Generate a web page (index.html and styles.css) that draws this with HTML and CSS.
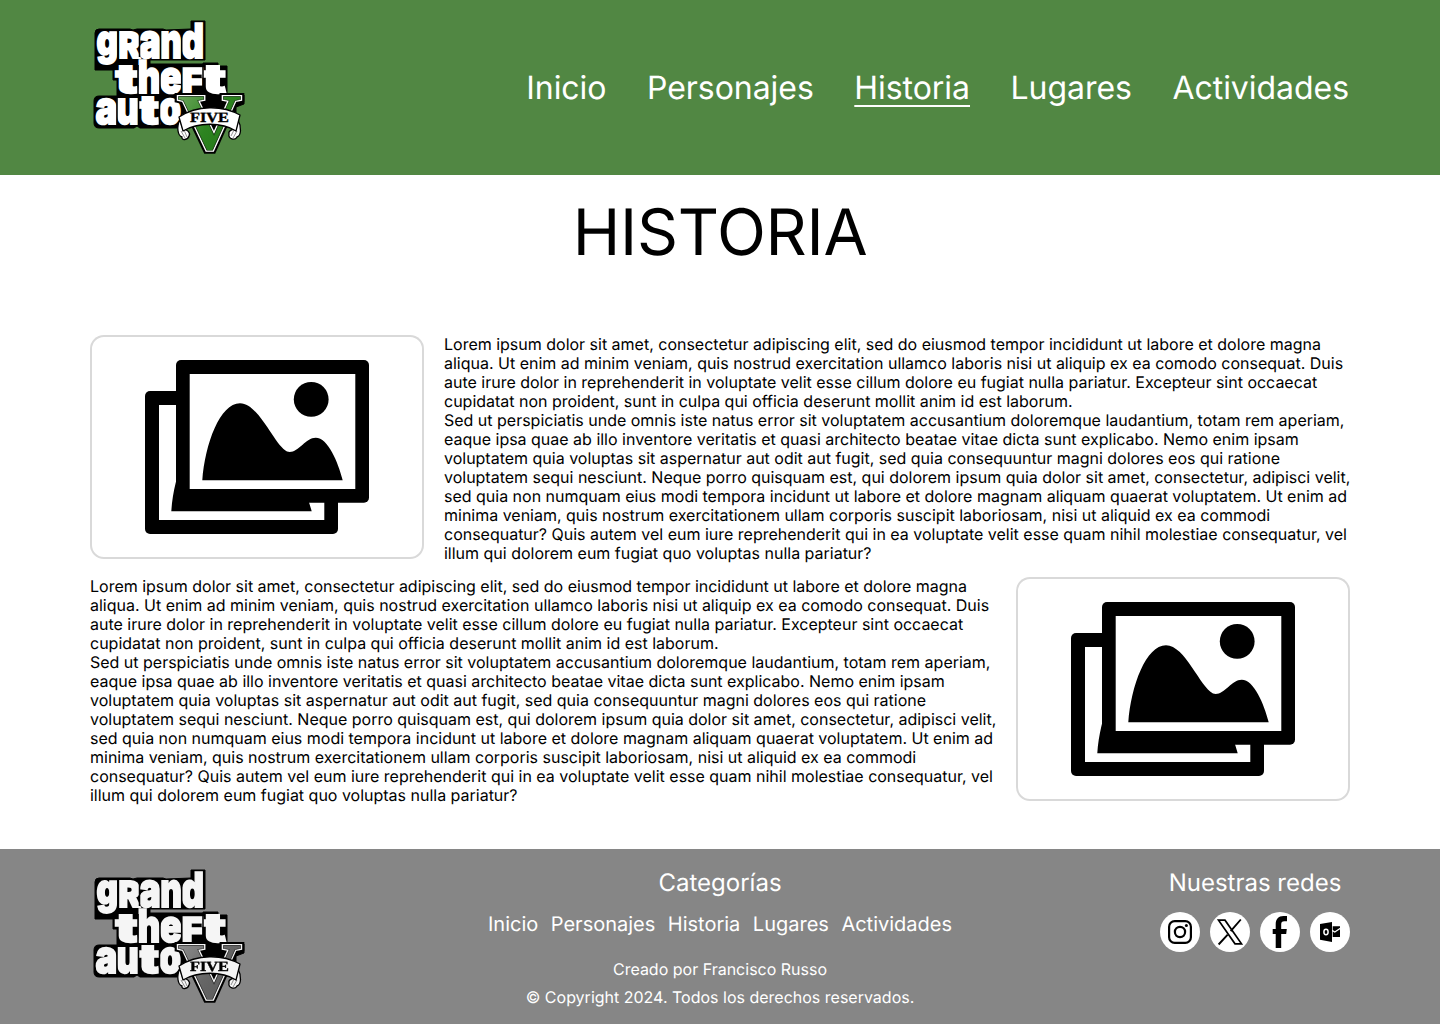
FILE: index.html
```html
<!DOCTYPE html>
<html lang="es">
<head>
<meta charset="utf-8">
<title>Historia</title>
<link rel="stylesheet" href="styles.css">
</head>
<body>
<svg class="sprite" aria-hidden="true">
  <defs>
    <linearGradient id="leaf" x1="0" y1="0" x2="1" y2="1">
      <stop offset="0" stop-color="#79ad68"/>
      <stop offset=".5" stop-color="#2d8420"/>
      <stop offset="1" stop-color="#1f6f14"/>
    </linearGradient>
    <text id="numeral" x="93.500" y="139" class="numeral" textLength="64" lengthAdjust="spacingAndGlyphs">V</text>
    <symbol id="logo" viewBox="6 0 155 155">
      <path class="plate" d="M15 19H46L49 20L53 19H79L82 20L107 19V11H121V50H66V54H119V53H134V56H143V85H160V94L152 97V117H95L93 118H56L53 116L50 118H15Q10 118 10 113V91Q10 86 15 86H33V70H29V60H11V23Q11 19 15 19Z"/>
      <g class="word">
        <text y="47.500"><tspan x="12.500" y="44.500" class="gee" textLength="21.500" lengthAdjust="spacingAndGlyphs">g</tspan><tspan x="34.500" y="47.500" class="small" textLength="22" lengthAdjust="spacingAndGlyphs">R</tspan><tspan x="55" textLength="22" lengthAdjust="spacingAndGlyphs">a</tspan><tspan x="76" textLength="22" lengthAdjust="spacingAndGlyphs">n</tspan><tspan x="97" textLength="23" lengthAdjust="spacingAndGlyphs">d</tspan></text>
        <text y="83" class="low"><tspan x="31.500" class="tee" textLength="23" lengthAdjust="spacingAndGlyphs">t</tspan><tspan x="53.500" textLength="23" lengthAdjust="spacingAndGlyphs">h</tspan><tspan x="75.500" textLength="22.500" lengthAdjust="spacingAndGlyphs">e</tspan><tspan x="97.500" class="eff" textLength="22" lengthAdjust="spacingAndGlyphs">F</tspan><tspan x="118.500" class="tee" textLength="23.500" lengthAdjust="spacingAndGlyphs">t</tspan></text>
        <text y="114" class="last"><tspan x="11.500" textLength="22" lengthAdjust="spacingAndGlyphs">a</tspan><tspan x="32" textLength="23" lengthAdjust="spacingAndGlyphs">u</tspan><tspan x="54.500" class="tee" textLength="21" lengthAdjust="spacingAndGlyphs">t</tspan><tspan x="75" textLength="22" lengthAdjust="spacingAndGlyphs">o</tspan></text>
      </g>
      <path class="seams" d="M34 21V52M55.500 21V47M76.500 21V49M97.700 21V49M54 55V84M76 57V84M97.700 57V84M119 57V84M33 87V116M54.500 87V116M75.500 87V116"/>
      <use href="#numeral" class="edge"/>
      <use href="#numeral" class="rim"/>
      <use href="#numeral" class="core"/>
      <path class="ribbon" d="M96 110C92 117 94 126 98 127C97 131 104 130 105 126C107 123 103 119 99 119ZM154 110C158 117 157 126 153 127C151 131 144 129 145 124C144 121 148 119 152 119Z"/>
      <path class="curl" d="M97 121L101 128M100 120L103 127M153 121L149 128M150 120L147 126"/>
      <path class="ribbon" d="M95 107C113 95 138 95 156 105L152 121C138 112 114 112 99 121Z"/>
      <text x="106" y="111.500" class="five" textLength="39" lengthAdjust="spacingAndGlyphs">FIVE</text>
    </symbol>
    <symbol id="pictures" viewBox="0 0 334 224">
      <rect x="55" y="56" width="193" height="143" rx="5"/>
      <path fill="#fff" d="M69 70H234.300V185H69Z"/>
      <path id="hills" d="M81.300 176.300C84 140 99 99.300 119 99.300C138 99.300 153 141 166 147.500C176 151 184 133.700 194.700 133.700C207 133.700 217 158 221.700 176.300Z"/>
      <rect x="86" y="25" width="193" height="142.700" rx="5"/>
      <path fill="#fff" d="M99.700 39H265.300V154H99.700Z"/>
      <use href="#hills" x="31" y="-31"/>
      <circle cx="221.200" cy="64.400" r="17.400"/>
    </symbol>
  </defs>
</svg>

<header class="header">
  <svg class="logo" role="img" aria-label="Grand Theft Auto V"><use href="#logo"/></svg>
  <nav class="nav">
    <a>Inicio</a>
    <a>Personajes</a>
    <a class="active">Historia</a>
    <a>Lugares</a>
    <a>Actividades</a>
  </nav>
</header>

<main class="main">
  <h1 class="title">HISTORIA</h1>
  <section class="row">
    <svg class="picture"><use href="#pictures"/></svg>
    <p class="copy">Lorem ipsum dolor sit amet, consectetur adipiscing elit, sed do eiusmod tempor incididunt ut labore et dolore magna<br>aliqua. Ut enim ad minim veniam, quis nostrud exercitation ullamco laboris nisi ut aliquip ex ea comodo consequat. Duis<br>aute irure dolor in reprehenderit in voluptate velit esse cillum dolore eu fugiat nulla pariatur. Excepteur sint occaecat<br>cupidatat non proident, sunt in culpa qui officia deserunt mollit anim id est laborum.<br>Sed ut perspiciatis unde omnis iste natus error sit voluptatem accusantium doloremque laudantium, totam rem aperiam,<br>eaque ipsa quae ab illo inventore veritatis et quasi architecto beatae vitae dicta sunt explicabo. Nemo enim ipsam<br>voluptatem quia voluptas sit aspernatur aut odit aut fugit, sed quia consequuntur magni dolores eos qui ratione<br>voluptatem sequi nesciunt. Neque porro quisquam est, qui dolorem ipsum quia dolor sit amet, consectetur, adipisci velit,<br>sed quia non numquam eius modi tempora incidunt ut labore et dolore magnam aliquam quaerat voluptatem. Ut enim ad<br>minima veniam, quis nostrum exercitationem ullam corporis suscipit laboriosam, nisi ut aliquid ex ea commodi<br>consequatur? Quis autem vel eum iure reprehenderit qui in ea voluptate velit esse quam nihil molestiae consequatur, vel<br>illum qui dolorem eum fugiat quo voluptas nulla pariatur?</p>
  </section>
  <section class="row">
    <p class="copy">Lorem ipsum dolor sit amet, consectetur adipiscing elit, sed do eiusmod tempor incididunt ut labore et dolore magna<br>aliqua. Ut enim ad minim veniam, quis nostrud exercitation ullamco laboris nisi ut aliquip ex ea comodo consequat. Duis<br>aute irure dolor in reprehenderit in voluptate velit esse cillum dolore eu fugiat nulla pariatur. Excepteur sint occaecat<br>cupidatat non proident, sunt in culpa qui officia deserunt mollit anim id est laborum.<br>Sed ut perspiciatis unde omnis iste natus error sit voluptatem accusantium doloremque laudantium, totam rem aperiam,<br>eaque ipsa quae ab illo inventore veritatis et quasi architecto beatae vitae dicta sunt explicabo. Nemo enim ipsam<br>voluptatem quia voluptas sit aspernatur aut odit aut fugit, sed quia consequuntur magni dolores eos qui ratione<br>voluptatem sequi nesciunt. Neque porro quisquam est, qui dolorem ipsum quia dolor sit amet, consectetur, adipisci velit,<br>sed quia non numquam eius modi tempora incidunt ut labore et dolore magnam aliquam quaerat voluptatem. Ut enim ad<br>minima veniam, quis nostrum exercitationem ullam corporis suscipit laboriosam, nisi ut aliquid ex ea commodi<br>consequatur? Quis autem vel eum iure reprehenderit qui in ea voluptate velit esse quam nihil molestiae consequatur, vel<br>illum qui dolorem eum fugiat quo voluptas nulla pariatur?</p>
    <svg class="picture"><use href="#pictures"/></svg>
  </section>
</main>

<footer class="footer">
  <svg class="logo gray" role="img" aria-label="Grand Theft Auto V"><use href="#logo"/></svg>
  <div class="center">
    <h2 class="heading">Categorías</h2>
    <nav class="links">
      <a>Inicio</a>
      <a>Personajes</a>
      <a>Historia</a>
      <a>Lugares</a>
      <a>Actividades</a>
    </nav>
    <p class="credit">Creado por Francisco Russo</p>
    <p class="credit">© Copyright 2024. Todos los derechos reservados.</p>
  </div>
  <div class="social">
    <h2 class="heading">Nuestras redes</h2>
    <div class="icons">
      <svg viewBox="0 0 40 40"><circle cx="20" cy="20" r="20" fill="#fff"/><rect x="9.100" y="9.100" width="21.800" height="21.800" rx="5.600" fill="none" stroke="#000" stroke-width="2.200"/><circle cx="20" cy="20" r="5.100" fill="none" stroke="#000" stroke-width="2.200"/><circle cx="26.400" cy="13.600" r="1.500"/></svg>
      <svg viewBox="0 0 40 40"><circle cx="20" cy="20" r="20" fill="#fff"/><path d="M8.500 8.200H15L31.500 31.800H25Z" fill="none" stroke="#000" stroke-width="1.700"/><path d="M30.800 7.500L20.700 19.100M17.700 22.600L8.600 32.500" stroke="#000" stroke-width="1.900"/></svg>
      <svg viewBox="0 0 40 40"><circle cx="20" cy="20" r="20" fill="#fff"/><path d="M15.700 36V22H12.700V17.100H15.700V12.500C15.700 7 18.400 4 23.500 4H27V9.200H24.300C22 9.200 21.200 10.100 21.200 12.500V17.100H26.800L26.200 22H21.200V36Z"/></svg>
      <svg viewBox="0 0 40 40"><circle cx="20" cy="20" r="20" fill="#fff"/><path d="M10 12L22 10V30L10 27.800Z"/><path d="M22.700 14.200H30V15.800L24.800 19.300L22.700 18ZM22.700 19.500L24.800 20.800L30 17.300V25H22.700Z"/><ellipse cx="16" cy="20" rx="2.100" ry="2.700" fill="none" stroke="#fff" stroke-width="1.500"/></svg>
    </div>
  </div>
</footer>
</body>
</html>
```
FILE: styles.css
```css
* { box-sizing: border-box; }

body {
  margin: 0;
  height: 1024px;
  display: flex;
  flex-direction: column;
  font-family: Inter, "Liberation Sans", sans-serif;
  font-size: 16px;
  text-rendering: geometricPrecision;
  color: #000;
  background: #fff;
}

h1, h2, p { margin: 0; font-weight: 400; }

.sprite { display: block; width: 0; height: 0; overflow: hidden; flex: none; }

.header {
  height: 175px;
  padding: 0 91px 0 90px;
  display: flex;
  align-items: center;
  justify-content: space-between;
  background: #518743;
}

.logo { width: 155px; height: 155px; display: block; flex: none; }
.gray { filter: grayscale(1) brightness(.96); }

.plate { fill: #000; stroke: #000; stroke-width: 1; stroke-linejoin: round; }
.word {
  font-family: Inter, sans-serif;
  font-weight: 900;
  font-size: 48px;
  fill: #fff;
  stroke: #fff;
  stroke-width: 1.8;
}
.gee { font-size: 42px; }
.small { font-size: 36px; }
.low { font-size: 45px; }
.last { font-size: 46px; }
.eff { font-size: 34px; }
.tee { font-size: 40px; }
.seams { fill: none; stroke: #000; stroke-width: 1.5; }
.numeral { font-family: "Liberation Serif", serif; font-weight: 700; font-size: 80px; }
.edge { fill: #000; stroke: #000; stroke-width: 7; }
.rim { fill: #fff; stroke: #fff; stroke-width: 3; }
.core { fill: url(#leaf); stroke: #0b2407; stroke-width: .6; }
.ribbon { fill: #fff; stroke: #000; stroke-width: 1.3; stroke-linejoin: round; }
.curl { fill: none; stroke: #777; stroke-width: .8; }
.five {
  font-family: "Liberation Serif", serif;
  font-weight: 700;
  font-size: 14px;
  fill: #000;
  stroke: #000;
  stroke-width: .4;
}

.nav { display: flex; gap: 40.5px; font-size: 32px; line-height: 39px; letter-spacing: -.04px; color: #fff; }
.active { text-decoration: underline; text-decoration-thickness: 2px; text-underline-offset: 6px; }

.main { flex: 1; padding: 19px 90px 0; }
.title { font-size: 64px; line-height: 78px; letter-spacing: -.25px; text-align: center; margin-bottom: 63px; }
.row { display: flex; justify-content: space-between; margin-bottom: 14px; }
.picture {
  width: 334px;
  height: 224px;
  flex: none;
  border-radius: 14px;
  box-shadow: inset 0 0 0 2px #d9d9d9;
}
.copy { width: 906px; line-height: 19px; letter-spacing: -.007px; white-space: nowrap; }

.footer {
  height: 175px;
  padding: 10px 90px 0;
  display: grid;
  grid-template-columns: 1fr auto 1fr;
  background: #868686;
  color: #fff;
}
.center { display: flex; flex-direction: column; align-items: center; }
.heading { font-size: 24px; line-height: 29px; padding-top: 9px; }
.links { display: flex; gap: 12.5px; margin: 15px 0 22px; font-size: 20px; line-height: 24px; }
.credit { line-height: 19px; margin-top: 9px; }
.credit:first-of-type { margin-top: 2px; }
.social { display: flex; flex-direction: column; align-items: center; justify-self: end; gap: 15px; }
.icons { display: flex; gap: 10px; }
.icons svg { width: 40px; height: 40px; display: block; }
```
